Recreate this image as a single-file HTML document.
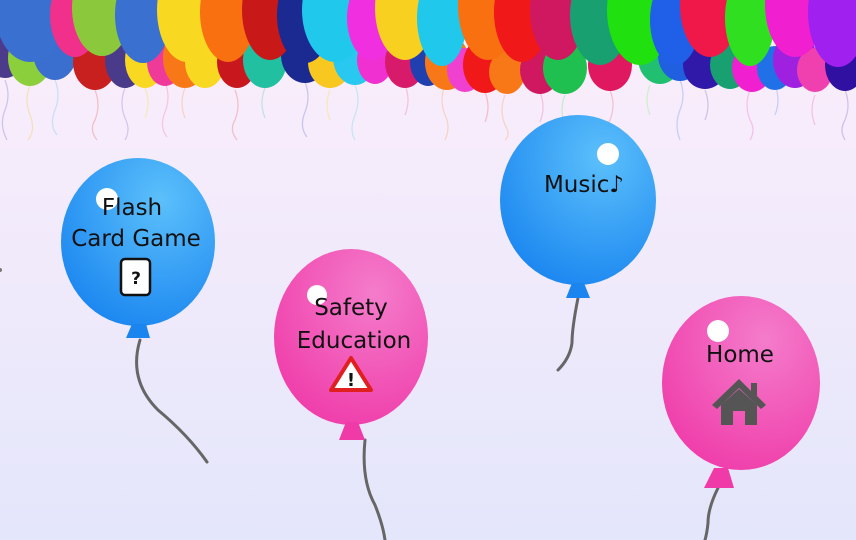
<!DOCTYPE html>
<html><head><meta charset="utf-8"><style>
html,body{margin:0;padding:0;width:856px;height:540px;overflow:hidden}
svg{display:block}
text{font-family:"DejaVu Sans","Liberation Sans",sans-serif;fill:#111}
</style></head><body>
<svg width="856" height="540" viewBox="0 0 856 540" xmlns="http://www.w3.org/2000/svg">
<defs>
<linearGradient id="bg" x1="0" y1="0" x2="0" y2="1"><stop offset="0" stop-color="#fceefb"/><stop offset="1" stop-color="#e4e6fb"/></linearGradient>
<radialGradient id="gb" cx="0.65" cy="0.25" r="0.9"><stop offset="0" stop-color="#5cc0fb"/><stop offset="1" stop-color="#1480ef"/></radialGradient>
<radialGradient id="gp" cx="0.65" cy="0.25" r="0.9"><stop offset="0" stop-color="#f47ccb"/><stop offset="1" stop-color="#ef36a6"/></radialGradient>
</defs>
<rect width="856" height="540" fill="url(#bg)"/>
<g fill="none" stroke-width="1.3" opacity="0.55">
<path d="M5 80 q6 15 0 30 q-6 15 2 30" stroke="#a9a6e0"/>
<path d="M30 85 q-6 15 0 30 q6 15 -2 25" stroke="#f0d98a"/>
<path d="M55 80 q6 15 0 30 q-6 15 2 25" stroke="#a9d3f0"/>
<path d="M95 90 q6 15 0 30 q-6 10 2 20" stroke="#f09aa0"/>
<path d="M125 88 q-6 15 0 30 q6 12 0 22" stroke="#c0a6e0"/>
<path d="M145 88 q6 15 0 30" stroke="#f3e58a"/>
<path d="M165 82 q6 15 0 30 q-6 15 2 25" stroke="#f6a6d0"/>
<path d="M185 88 q-6 15 0 30" stroke="#f6c09a"/>
<path d="M235 90 q6 15 0 30 q-6 10 2 20" stroke="#f09aa0"/>
<path d="M265 88 q-6 15 0 30" stroke="#9ad8c8"/>
<path d="M305 82 q6 15 0 30 q-6 15 2 25" stroke="#a0a8e0"/>
<path d="M330 90 q-6 15 0 30" stroke="#f3e58a"/>
<path d="M355 85 q6 15 0 30 q-6 15 0 25" stroke="#a0e0f0"/>
<path d="M405 85 q6 15 0 30" stroke="#f0a0c8"/>
<path d="M445 85 q-6 15 0 30 q6 12 0 25" stroke="#f6c09a"/>
<path d="M485 92 q6 15 0 30" stroke="#f09aa0"/>
<path d="M505 95 q-6 15 0 30 q6 10 0 15" stroke="#f6c09a"/>
<path d="M540 92 q6 15 0 30" stroke="#f0a0c8"/>
<path d="M565 95 q-6 15 0 30" stroke="#a0e8b0"/>
<path d="M610 90 q6 15 0 30 q-6 10 0 20" stroke="#f0a0b0"/>
<path d="M650 85 q-6 15 0 30" stroke="#b0f0a0"/>
<path d="M680 80 q6 15 0 30 q-6 15 0 30" stroke="#a0b8f0"/>
<path d="M705 90 q6 15 0 30" stroke="#b0a0e0"/>
<path d="M750 90 q-6 15 0 30 q6 10 0 20" stroke="#f0a0e0"/>
<path d="M775 85 q6 15 0 30" stroke="#a0b8f0"/>
<path d="M815 95 q-6 15 0 30" stroke="#f0a0d0"/>
<path d="M845 90 q6 15 0 30 q-6 10 0 20" stroke="#b0a0e0"/>
</g>
<g>
<ellipse cx="5" cy="50" rx="22" ry="28" fill="#4c3a8a"/>
<ellipse cx="30" cy="58" rx="22" ry="28" fill="#8ccf3c"/>
<ellipse cx="55" cy="52" rx="22" ry="28" fill="#3a6fd0"/>
<ellipse cx="95" cy="62" rx="22" ry="28" fill="#c8201e"/>
<ellipse cx="125" cy="60" rx="20" ry="28" fill="#4a3a8a"/>
<ellipse cx="145" cy="60" rx="20" ry="28" fill="#f8d820"/>
<ellipse cx="165" cy="62" rx="18" ry="24" fill="#f03a9a"/>
<ellipse cx="185" cy="58" rx="22" ry="30" fill="#f87818"/>
<ellipse cx="205" cy="62" rx="20" ry="26" fill="#f8d820"/>
<ellipse cx="237" cy="62" rx="20" ry="26" fill="#c8181e"/>
<ellipse cx="265" cy="60" rx="22" ry="28" fill="#20c0a0"/>
<ellipse cx="305" cy="55" rx="24" ry="28" fill="#1a2a90"/>
<ellipse cx="330" cy="62" rx="22" ry="26" fill="#f8c820"/>
<ellipse cx="355" cy="57" rx="22" ry="28" fill="#28c8f0"/>
<ellipse cx="375" cy="60" rx="18" ry="24" fill="#f030d0"/>
<ellipse cx="405" cy="62" rx="20" ry="26" fill="#d81a6a"/>
<ellipse cx="428" cy="62" rx="18" ry="24" fill="#2040b0"/>
<ellipse cx="447" cy="62" rx="22" ry="28" fill="#f87818"/>
<ellipse cx="465" cy="70" rx="18" ry="22" fill="#f040d0"/>
<ellipse cx="485" cy="65" rx="22" ry="28" fill="#f01818"/>
<ellipse cx="507" cy="72" rx="18" ry="22" fill="#f87818"/>
<ellipse cx="540" cy="70" rx="20" ry="24" fill="#d01860"/>
<ellipse cx="565" cy="68" rx="22" ry="26" fill="#20c050"/>
<ellipse cx="610" cy="65" rx="22" ry="26" fill="#e01860"/>
<ellipse cx="660" cy="58" rx="22" ry="26" fill="#20c070"/>
<ellipse cx="680" cy="55" rx="22" ry="26" fill="#2060e0"/>
<ellipse cx="705" cy="65" rx="22" ry="24" fill="#3018a8"/>
<ellipse cx="730" cy="65" rx="20" ry="24" fill="#18a070"/>
<ellipse cx="752" cy="68" rx="20" ry="24" fill="#f020d0"/>
<ellipse cx="775" cy="68" rx="18" ry="22" fill="#2070e8"/>
<ellipse cx="795" cy="60" rx="22" ry="28" fill="#a020e0"/>
<ellipse cx="815" cy="70" rx="18" ry="22" fill="#f040b0"/>
<ellipse cx="845" cy="65" rx="20" ry="26" fill="#3010a0"/>
</g>
<g>
<ellipse cx="30" cy="10" rx="35" ry="52" fill="#3a70d0"/>
<ellipse cx="75" cy="15" rx="25" ry="42" fill="#f0308a"/>
<ellipse cx="102" cy="8" rx="30" ry="48" fill="#8cc83c"/>
<ellipse cx="143" cy="15" rx="28" ry="48" fill="#3a70d0"/>
<ellipse cx="187" cy="10" rx="30" ry="52" fill="#f8d820"/>
<ellipse cx="228" cy="12" rx="28" ry="50" fill="#f87010"/>
<ellipse cx="270" cy="10" rx="28" ry="50" fill="#c81818"/>
<ellipse cx="305" cy="15" rx="28" ry="48" fill="#1a2a90"/>
<ellipse cx="335" cy="10" rx="33" ry="52" fill="#20c8ec"/>
<ellipse cx="372" cy="18" rx="25" ry="42" fill="#f030e0"/>
<ellipse cx="405" cy="8" rx="30" ry="52" fill="#f8d020"/>
<ellipse cx="442" cy="18" rx="25" ry="48" fill="#20c8ec"/>
<ellipse cx="488" cy="5" rx="30" ry="55" fill="#f87010"/>
<ellipse cx="522" cy="12" rx="28" ry="50" fill="#f01818"/>
<ellipse cx="558" cy="10" rx="28" ry="50" fill="#d01860"/>
<ellipse cx="600" cy="15" rx="30" ry="50" fill="#18a070"/>
<ellipse cx="640" cy="10" rx="33" ry="55" fill="#20e010"/>
<ellipse cx="675" cy="20" rx="25" ry="45" fill="#2060e8"/>
<ellipse cx="710" cy="5" rx="30" ry="52" fill="#f01848"/>
<ellipse cx="750" cy="18" rx="25" ry="48" fill="#30e020"/>
<ellipse cx="795" cy="5" rx="30" ry="52" fill="#f020d0"/>
<ellipse cx="838" cy="12" rx="30" ry="55" fill="#a020f0"/>
</g>
<g fill="none" stroke="#666" stroke-width="3" stroke-linecap="round">
<path d="M140 340 q-12 40 18 70 q30 25 49 52"/>
<path d="M365 440 q-4 40 10 65 q8 20 10 35"/>
<path d="M578 298 q-6 30 -6 45 q-2 15 -14 27"/>
<path d="M718 488 q-10 20 -10 35 q-1 10 -3 17"/>
</g>
<ellipse cx="138" cy="242" rx="77" ry="84" fill="url(#gb)"/>
<path d="M132 324 L146 324 L150 338 L126 338 Z" fill="#1a84ef"/>
<circle cx="107" cy="199" r="11" fill="#fff"/>
<ellipse cx="351" cy="337" rx="77" ry="88" fill="url(#gp)"/>
<path d="M346 422 L358 422 L365 440 L339 440 Z" fill="#ef3aa8"/>
<circle cx="317" cy="295" r="10" fill="#fff"/>
<ellipse cx="578" cy="200" rx="78" ry="85" fill="url(#gb)"/>
<path d="M572 283 L584 283 L590 298 L566 298 Z" fill="#1a84ef"/>
<circle cx="608" cy="154" r="11" fill="#fff"/>
<ellipse cx="741" cy="383" rx="79" ry="87" fill="url(#gp)"/>
<path d="M714 468 L728 468 L734 488 L704 488 Z" fill="#ef3aa8"/>
<circle cx="718" cy="331" r="11" fill="#fff"/>
<text x="132" y="215" font-size="23" text-anchor="middle">Flash</text>
<text x="136" y="246" font-size="23" text-anchor="middle">Card Game</text>
<rect x="121" y="259" width="29" height="36" rx="4" fill="#fff" stroke="#111" stroke-width="2.5"/>
<text x="136" y="284" font-size="17" font-weight="bold" text-anchor="middle">?</text>
<text x="351" y="315" font-size="23" text-anchor="middle">Safety</text>
<text x="354" y="348" font-size="23" text-anchor="middle">Education</text>
<path d="M351 358 L371 390 L331 390 Z" fill="#fff" stroke="#e02020" stroke-width="4" stroke-linejoin="round"/>
<text x="351" y="386" font-size="18" font-weight="bold" text-anchor="middle">!</text>
<text x="584" y="192" font-size="23" text-anchor="middle">Music♪</text>
<text x="740" y="362" font-size="23" text-anchor="middle">Home</text>
<path d="M739 379 L712 405 L717 409 L739 388 L761 409 L766 405 L757 396 L757 383 L751 383 L751 391 Z" fill="#555"/>
<path d="M721 405 L739 389 L757 405 L757 425 L745 425 L745 411 L733 411 L733 425 L721 425 Z" fill="#555"/>
<circle cx="0" cy="270" r="2" fill="#777"/>
</svg>
</body></html>
